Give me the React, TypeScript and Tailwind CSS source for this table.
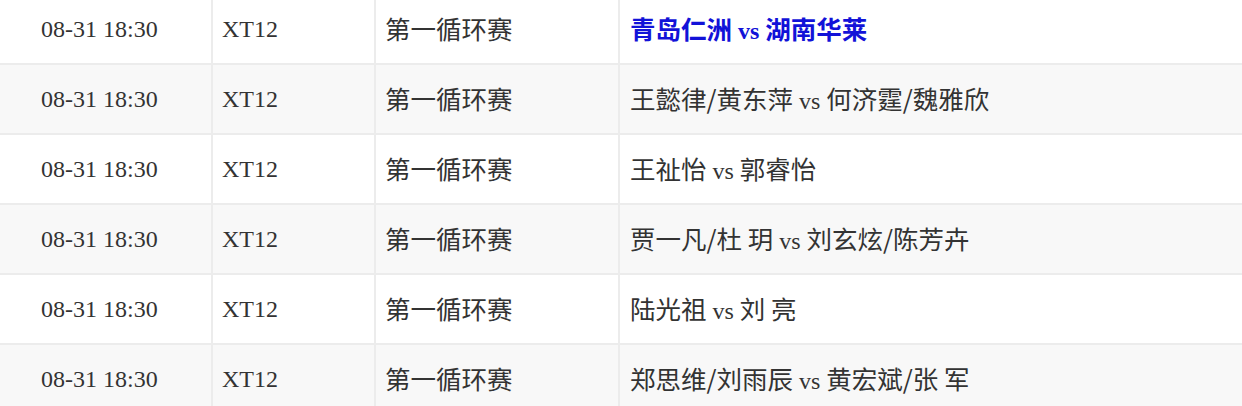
import React from 'react'

type Match = {
  time: string
  table: string
  round: string
  players: string
  highlight?: boolean
}

const matches: Match[] = [
  { time: '08-31 18:30', table: 'XT12', round: '第一循环赛', players: '青岛仁洲 vs 湖南华莱', highlight: true },
  { time: '08-31 18:30', table: 'XT12', round: '第一循环赛', players: '王懿律/黄东萍 vs 何济霆/魏雅欣' },
  { time: '08-31 18:30', table: 'XT12', round: '第一循环赛', players: '王祉怡 vs 郭睿怡' },
  { time: '08-31 18:30', table: 'XT12', round: '第一循环赛', players: '贾一凡/杜 玥 vs 刘玄炫/陈芳卉' },
  { time: '08-31 18:30', table: 'XT12', round: '第一循环赛', players: '陆光祖 vs 刘 亮' },
  { time: '08-31 18:30', table: 'XT12', round: '第一循环赛', players: '郑思维/刘雨辰 vs 黄宏斌/张 军' },
]

// CJK runs are drawn a bit larger than the latin text, like the source page
function Mixed({ text }: { text: string }) {
  const parts = text.split(/([\u4e00-\u9fff\/]+(?: [\u4e00-\u9fff]+)*)/)
  return (
    <span>
      {parts.map((p, i) =>
        /[\u4e00-\u9fff]/.test(p) ? (
          <span key={i} className="text-[25.5px] font-['Noto_Sans_CJK_SC',sans-serif]">
            {p}
          </span>
        ) : (
          <span key={i}>{p}</span>
        )
      )}
    </span>
  )
}

export default function App() {
  return (
    <div className="w-[1242px] h-[406px] overflow-hidden bg-white">
      <div className="-mt-[5px] font-['Liberation_Serif','Noto_Sans_CJK_SC',serif] text-[24px] text-[#333]">
        {matches.map((m, i) => (
          <div
            key={i}
            className={`flex h-[70px] border-b-2 border-[#ececec] ${i % 2 === 1 ? 'bg-[#f8f8f8]' : 'bg-white'}`}
          >
            <div className="w-[211px] flex items-center pl-[41px] whitespace-nowrap">{m.time}</div>
            <div className="w-[163px] flex items-center border-l-2 border-[#ececec] pl-[9px]">{m.table}</div>
            <div className="w-[244px] flex items-center border-l-2 border-[#ececec] pl-[9px]">
              <Mixed text={m.round} />
            </div>
            <div
              className={`flex-1 flex items-center border-l-2 border-[#ececec] pl-[10px] whitespace-pre ${
                m.highlight ? 'text-[#1212d8] font-bold' : ''
              }`}
            >
              <Mixed text={m.players} />
            </div>
          </div>
        ))}
      </div>
    </div>
  )
}
